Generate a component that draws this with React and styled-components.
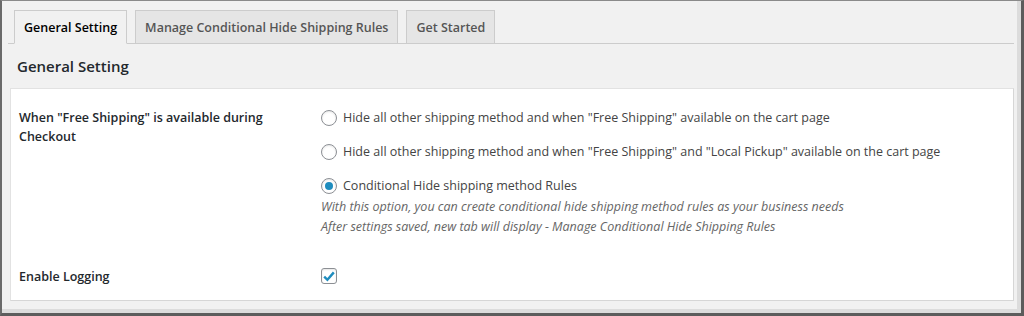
import styled, { createGlobalStyle } from "styled-components";

const GlobalStyle = createGlobalStyle`
  html, body {
    margin: 0;
    padding: 0;
    background: #f1f1f1;
  }
  body {
    font-family: "Open Sans", "Noto Sans", sans-serif;
    color: #23282d;
  }
`;

const tabs = [
  { id: "general", label: "General Setting", active: true },
  { id: "rules", label: "Manage Conditional Hide Shipping Rules" },
  { id: "start", label: "Get Started" },
];

const options = [
  {
    id: "hide_all",
    label: 'Hide all other shipping method and when "Free Shipping" available on the cart page',
  },
  {
    id: "hide_local",
    label: 'Hide all other shipping method and when "Free Shipping" and "Local Pickup" available on the cart page',
  },
  {
    id: "conditional",
    label: "Conditional Hide shipping method Rules",
    checked: true,
  },
];

const App = () => {
  return (
    <>
      <GlobalStyle />
      <Frame>
        <TabBar>
          {tabs.map((tab) => (
            <Tab key={tab.id} $active={tab.active}>
              {tab.label}
            </Tab>
          ))}
        </TabBar>
        <Heading>General Setting</Heading>
        <Panel>
          <FieldRow>
            <FieldLabel>When "Free Shipping" is available during Checkout</FieldLabel>
            <Field>
              <RadioList>
                {options.map((opt) => (
                  <RadioRow key={opt.id}>
                    <Radio $checked={opt.checked} />
                    {opt.label}
                  </RadioRow>
                ))}
              </RadioList>
              <Description>
                With this option, you can create conditional hide shipping method rules as your business needs
                <br />
                After settings saved, new tab will display - Manage Conditional Hide Shipping Rules
              </Description>
            </Field>
          </FieldRow>
          <FieldRow $last>
            <FieldLabel>Enable Logging</FieldLabel>
            <Field>
              <Checkbox>
                <svg width="12" height="11" viewBox="0 0 12 11">
                  <path d="M1.2 5.6 L4.4 8.8 L10.8 1.4" fill="none" stroke="#1e8cbe" strokeWidth="2.4" />
                </svg>
              </Checkbox>
            </Field>
          </FieldRow>
        </Panel>
      </Frame>
    </>
  );
};

export default App;

const Frame = styled.div`
  box-sizing: border-box;
  width: 1024px;
  height: 316px;
  border-left: 2px solid #6a6a6a;
  border-top: 1px solid #8a8a8a;
  border-right: 3px solid #5c5c5c;
  border-bottom: 3px solid #5c5c5c;
  box-shadow: inset -4px -4px 0 #dcdcdc;
  padding: 9px 7px 0 6px;
  background: #f1f1f1;
`;

const TabBar = styled.div`
  display: flex;
  align-items: flex-end;
  gap: 8px;
  padding-left: 6px;
  border-bottom: 1px solid #cccccc;
  height: 33px;
`;

const Tab = styled.div`
  box-sizing: border-box;
  height: ${(p) => (p.$active ? "34px" : "33px")};
  margin-bottom: ${(p) => (p.$active ? "-1px" : "0")};
  padding: 0 9px;
  display: flex;
  align-items: center;
  border: 1px solid #cccccc;
  border-bottom: ${(p) => (p.$active ? "1px solid #f1f1f1" : "none")};
  background: ${(p) => (p.$active ? "#f1f1f1" : "#e5e5e5")};
  color: ${(p) => (p.$active ? "#000000" : "#555555")};
  font-size: 12.5px;
  font-weight: 600;
  white-space: nowrap;
`;

const Heading = styled.h2`
  margin: 0;
  padding: 12px 0 0 9px;
  height: 32px;
  font-size: 15px;
  font-weight: 600;
  color: #23282d;
`;

const Panel = styled.div`
  margin: 0 0 0 2px;
  background: #ffffff;
  border: 1px solid #e2e2e2;
  border-right-color: #d6d6d6;
  border-bottom-color: #d6d6d6;
  padding: 19px 0 14px 8px;
  height: 178px;
`;

const FieldRow = styled.div`
  display: grid;
  grid-template-columns: 302px 1fr;
  margin-bottom: ${(p) => (p.$last ? "0" : "30px")};
`;

const FieldLabel = styled.div`
  font-size: 12.5px;
  font-weight: 600;
  line-height: 19px;
  color: #23282d;
  width: 255px;
`;

const Field = styled.div`
  font-size: 12.5px;
  line-height: 20px;
  color: #444444;
`;

const RadioList = styled.div`
  display: flex;
  flex-direction: column;
  gap: 14px;
`;

const RadioRow = styled.label`
  display: flex;
  align-items: center;
  gap: 6px;
  height: 20px;
  color: #444444;
`;

const Radio = styled.span`
  box-sizing: border-box;
  width: 16px;
  height: 16px;
  border-radius: 50%;
  border: 1px solid #8c8f94;
  background: #ffffff;
  box-shadow: inset 0 1px 2px rgba(0, 0, 0, 0.1);
  display: flex;
  align-items: center;
  justify-content: center;
  flex-shrink: 0;

  &::after {
    content: "";
    display: ${(p) => (p.$checked ? "block" : "none")};
    width: 8px;
    height: 8px;
    border-radius: 50%;
    background: #1e8cbe;
  }
`;

const Description = styled.p`
  margin: 1px 0 0;
  font-style: italic;
  color: #666666;
  font-size: 12.5px;
  line-height: 20px;
`;

const Checkbox = styled.span`
  box-sizing: border-box;
  width: 16px;
  height: 16px;
  margin-top: 1px;
  border: 1px solid #8c8f94;
  border-radius: 3px;
  background: #ffffff;
  box-shadow: inset 0 1px 2px rgba(0, 0, 0, 0.1);
  display: flex;
  align-items: center;
  justify-content: center;
`;
